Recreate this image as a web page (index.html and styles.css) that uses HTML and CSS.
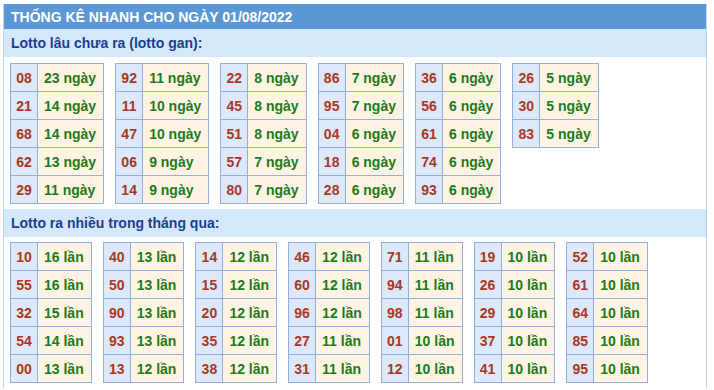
FILE: index.html
```html
<!DOCTYPE html>
<html lang="vi">
<head>
<meta charset="utf-8">
<link rel="stylesheet" href="styles.css">
</head>
<body>
<div class="box">
  <div class="title">THỐNG KÊ NHANH CHO NGÀY 01/08/2022</div>
  <div class="sub">Lotto lâu chưa ra (lotto gan):</div>
  <div class="grid grid-first">
    <table class="t"><tr><td class="n">08</td><td class="v">23 ngày</td></tr><tr><td class="n">21</td><td class="v">14 ngày</td></tr><tr><td class="n">68</td><td class="v">14 ngày</td></tr><tr><td class="n">62</td><td class="v">13 ngày</td></tr><tr><td class="n">29</td><td class="v">11 ngày</td></tr></table>
    <table class="t"><tr><td class="n">92</td><td class="v">11 ngày</td></tr><tr><td class="n">11</td><td class="v">10 ngày</td></tr><tr><td class="n">47</td><td class="v">10 ngày</td></tr><tr><td class="n">06</td><td class="v">9 ngày</td></tr><tr><td class="n">14</td><td class="v">9 ngày</td></tr></table>
    <table class="t"><tr><td class="n">22</td><td class="v">8 ngày</td></tr><tr><td class="n">45</td><td class="v">8 ngày</td></tr><tr><td class="n">51</td><td class="v">8 ngày</td></tr><tr><td class="n">57</td><td class="v">7 ngày</td></tr><tr><td class="n">80</td><td class="v">7 ngày</td></tr></table>
    <table class="t"><tr><td class="n">86</td><td class="v">7 ngày</td></tr><tr><td class="n">95</td><td class="v">7 ngày</td></tr><tr><td class="n">04</td><td class="v">6 ngày</td></tr><tr><td class="n">18</td><td class="v">6 ngày</td></tr><tr><td class="n">28</td><td class="v">6 ngày</td></tr></table>
    <table class="t"><tr><td class="n">36</td><td class="v">6 ngày</td></tr><tr><td class="n">56</td><td class="v">6 ngày</td></tr><tr><td class="n">61</td><td class="v">6 ngày</td></tr><tr><td class="n">74</td><td class="v">6 ngày</td></tr><tr><td class="n">93</td><td class="v">6 ngày</td></tr></table>
    <table class="t"><tr><td class="n">26</td><td class="v">5 ngày</td></tr><tr><td class="n">30</td><td class="v">5 ngày</td></tr><tr><td class="n">83</td><td class="v">5 ngày</td></tr></table>
  </div>
  <div class="sub">Lotto ra nhiều trong tháng qua:</div>
  <div class="grid">
    <table class="t"><tr><td class="n">10</td><td class="v">16 lần</td></tr><tr><td class="n">55</td><td class="v">16 lần</td></tr><tr><td class="n">32</td><td class="v">15 lần</td></tr><tr><td class="n">54</td><td class="v">14 lần</td></tr><tr><td class="n">00</td><td class="v">13 lần</td></tr></table>
    <table class="t"><tr><td class="n">40</td><td class="v">13 lần</td></tr><tr><td class="n">50</td><td class="v">13 lần</td></tr><tr><td class="n">90</td><td class="v">13 lần</td></tr><tr><td class="n">93</td><td class="v">13 lần</td></tr><tr><td class="n">13</td><td class="v">12 lần</td></tr></table>
    <table class="t"><tr><td class="n">14</td><td class="v">12 lần</td></tr><tr><td class="n">15</td><td class="v">12 lần</td></tr><tr><td class="n">20</td><td class="v">12 lần</td></tr><tr><td class="n">35</td><td class="v">12 lần</td></tr><tr><td class="n">38</td><td class="v">12 lần</td></tr></table>
    <table class="t"><tr><td class="n">46</td><td class="v">12 lần</td></tr><tr><td class="n">60</td><td class="v">12 lần</td></tr><tr><td class="n">96</td><td class="v">12 lần</td></tr><tr><td class="n">27</td><td class="v">11 lần</td></tr><tr><td class="n">31</td><td class="v">11 lần</td></tr></table>
    <table class="t"><tr><td class="n">71</td><td class="v">11 lần</td></tr><tr><td class="n">94</td><td class="v">11 lần</td></tr><tr><td class="n">98</td><td class="v">11 lần</td></tr><tr><td class="n">01</td><td class="v">10 lần</td></tr><tr><td class="n">12</td><td class="v">10 lần</td></tr></table>
    <table class="t"><tr><td class="n">19</td><td class="v">10 lần</td></tr><tr><td class="n">26</td><td class="v">10 lần</td></tr><tr><td class="n">29</td><td class="v">10 lần</td></tr><tr><td class="n">37</td><td class="v">10 lần</td></tr><tr><td class="n">41</td><td class="v">10 lần</td></tr></table>
    <table class="t"><tr><td class="n">52</td><td class="v">10 lần</td></tr><tr><td class="n">61</td><td class="v">10 lần</td></tr><tr><td class="n">64</td><td class="v">10 lần</td></tr><tr><td class="n">85</td><td class="v">10 lần</td></tr><tr><td class="n">95</td><td class="v">10 lần</td></tr></table>
  </div>
</div>
</body>
</html>
```
FILE: styles.css
```css
body {
  margin: 0;
  background: #fff;
  font-family: "Liberation Sans", Arial, sans-serif;
  font-weight: bold;
  font-size: 14px;
}
.box {
  margin: 4px 0 0 3px;
  width: 702px;
  border-left: 1px solid #c3d5ea;
  border-right: 1px solid #c3d5ea;
}
.title {
  height: 25px;
  line-height: 26px;
  background: #5b97d5;
  color: #fff;
  padding-left: 7px;
}
.sub {
  height: 28px;
  line-height: 28px;
  background: #d5e7fa;
  color: #1b3f8e;
  padding-left: 7px;
}
.grid {
  display: flex;
  align-items: flex-start;
  gap: 11px;
  padding: 5px 0 5px 6px;
}
.grid-first {
  padding-top: 6px;
}
.t {
  border-collapse: collapse;
}
.t td {
  height: 27px;
  padding: 0;
  border: 1px solid #8fb0e2;
  white-space: nowrap;
}
.n {
  width: 26px;
  text-align: center;
  background: #dde9fb;
  color: #a8381f;
}
.t .v {
  min-width: 39px;
  padding: 0 7px 0 6px;
  background: #fff4e3;
  color: #1d7a1d;
}
```
